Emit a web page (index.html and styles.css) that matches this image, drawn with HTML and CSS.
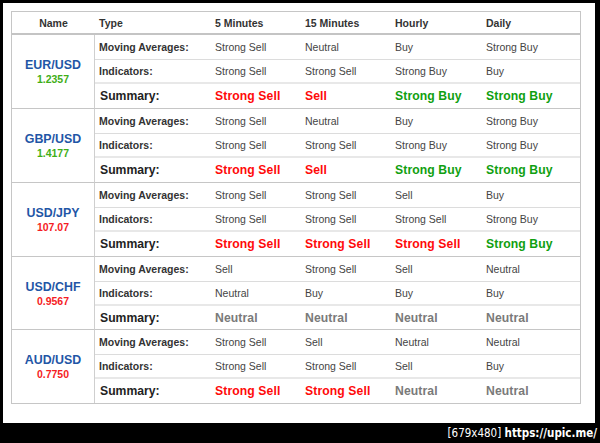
FILE: index.html
```html
<!DOCTYPE html>
<html>
<head>
<meta charset="utf-8">
<link rel="stylesheet" href="styles.css">
</head>
<body>
<div class="frame">
  <div class="grid">
    <div class="hd center">Name</div>
    <div class="hd">Type</div>
    <div class="hd">5 Minutes</div>
    <div class="hd">15 Minutes</div>
    <div class="hd">Hourly</div>
    <div class="hd">Daily</div>

    <div class="name"><span class="pair">EUR/USD</span><span class="price up">1.2357</span></div>
    <div class="c lbl">Moving Averages:</div><div class="c">Strong Sell</div><div class="c">Neutral</div><div class="c">Buy</div><div class="c">Strong Buy</div>
    <div class="c lbl ind">Indicators:</div><div class="c ind">Strong Sell</div><div class="c ind">Strong Sell</div><div class="c ind">Strong Buy</div><div class="c ind">Buy</div>
    <div class="c sum grp">Summary:</div><div class="c sv red grp">Strong Sell</div><div class="c sv red grp">Sell</div><div class="c sv grn grp">Strong Buy</div><div class="c sv grn grp">Strong Buy</div>

    <div class="name"><span class="pair">GBP/USD</span><span class="price up">1.4177</span></div>
    <div class="c lbl">Moving Averages:</div><div class="c">Strong Sell</div><div class="c">Neutral</div><div class="c">Buy</div><div class="c">Strong Buy</div>
    <div class="c lbl ind">Indicators:</div><div class="c ind">Strong Sell</div><div class="c ind">Strong Sell</div><div class="c ind">Strong Buy</div><div class="c ind">Strong Buy</div>
    <div class="c sum grp">Summary:</div><div class="c sv red grp">Strong Sell</div><div class="c sv red grp">Sell</div><div class="c sv grn grp">Strong Buy</div><div class="c sv grn grp">Strong Buy</div>

    <div class="name"><span class="pair">USD/JPY</span><span class="price down">107.07</span></div>
    <div class="c lbl">Moving Averages:</div><div class="c">Strong Sell</div><div class="c">Strong Sell</div><div class="c">Sell</div><div class="c">Buy</div>
    <div class="c lbl ind">Indicators:</div><div class="c ind">Strong Sell</div><div class="c ind">Strong Sell</div><div class="c ind">Strong Sell</div><div class="c ind">Strong Buy</div>
    <div class="c sum grp">Summary:</div><div class="c sv red grp">Strong Sell</div><div class="c sv red grp">Strong Sell</div><div class="c sv red grp">Strong Sell</div><div class="c sv grn grp">Strong Buy</div>

    <div class="name"><span class="pair">USD/CHF</span><span class="price down">0.9567</span></div>
    <div class="c lbl">Moving Averages:</div><div class="c">Sell</div><div class="c">Strong Sell</div><div class="c">Sell</div><div class="c">Neutral</div>
    <div class="c lbl ind">Indicators:</div><div class="c ind">Neutral</div><div class="c ind">Buy</div><div class="c ind">Buy</div><div class="c ind">Buy</div>
    <div class="c sum grp">Summary:</div><div class="c sv gry grp">Neutral</div><div class="c sv gry grp">Neutral</div><div class="c sv gry grp">Neutral</div><div class="c sv gry grp">Neutral</div>

    <div class="name last"><span class="pair">AUD/USD</span><span class="price down">0.7750</span></div>
    <div class="c lbl">Moving Averages:</div><div class="c">Strong Sell</div><div class="c">Sell</div><div class="c">Neutral</div><div class="c">Neutral</div>
    <div class="c lbl ind">Indicators:</div><div class="c ind">Strong Sell</div><div class="c ind">Strong Sell</div><div class="c ind">Sell</div><div class="c ind">Buy</div>
    <div class="c sum end">Summary:</div><div class="c sv red end">Strong Sell</div><div class="c sv red end">Strong Sell</div><div class="c sv gry end">Neutral</div><div class="c sv gry end">Neutral</div>
  </div>
</div>
<div class="footer">[679x480] <b>https://upic.me/</b></div>
</body>
</html>
```

FILE: styles.css
```css
* { box-sizing: border-box; }
html, body { margin: 0; padding: 0; }
body {
  background: #000;
  width: 600px;
  height: 443px;
  overflow: hidden;
  font-family: "Liberation Sans", Arial, sans-serif;
  padding: 3px 5px 0 3px;
}
.frame {
  background: #fff;
  width: 592px;
  height: 420px;
  padding: 8px 0 0 8px;
}
.grid {
  display: grid;
  width: 570px;
  border: 1px solid #c6c6c6;
  grid-template-columns: 83px 116px 90px 90px 91px 98px;
  grid-template-rows: 23px repeat(3, 25px 24px 25px) repeat(2, 25px 24px 24px);
}
.hd {
  display: flex;
  align-items: center;
  padding-left: 4px;
  font-size: 10.5px;
  font-weight: bold;
  color: #333;
  border-bottom: 2px solid #c4c4c4;
}
.hd.center { justify-content: center; padding-left: 0; }
.name {
  grid-row: span 3;
  display: flex;
  flex-direction: column;
  align-items: center;
  justify-content: center;
  border-right: 1px solid #cfcfcf;
  border-bottom: 1px solid #c6c6c6;
  font-weight: bold;
  padding-top: 1px;
}
.name.last { border-bottom: 0; }
.pair { font-size: 12.4px; color: #1f56a6; line-height: 15px; }
.price { font-size: 10.5px; line-height: 13px; }
.price.up { color: #3fae17; }
.price.down { color: #f51c24; }
.c {
  display: flex;
  align-items: center;
  padding-left: 4px;
  font-size: 10.5px;
  color: #444;
  border-bottom: 1px solid #dcdcdc;
  white-space: nowrap;
}
.c.ind { border-bottom: 2px solid #e8e8e8; }
.c.grp { border-bottom: 1px solid #c6c6c6; }
.c.end { border-bottom: 0; }
.lbl { font-weight: bold; color: #333; }
.sum { font-weight: bold; color: #222; font-size: 12.2px; padding-left: 5px; }
.sv { font-weight: bold; font-size: 12.2px; letter-spacing: 0.1px; }
.red { color: #ff0a0a; }
.grn { color: #10a010; }
.gry { color: #7a7a7a; }
.footer {
  text-align: right;
  color: #fff;
  font-family: "DejaVu Sans Condensed", "DejaVu Sans", sans-serif;
  font-stretch: condensed;
  font-size: 11.5px;
  line-height: 20px;
  padding-top: 0px;
  margin-right: -2px;
}
.footer b { font-weight: bold; }
```
